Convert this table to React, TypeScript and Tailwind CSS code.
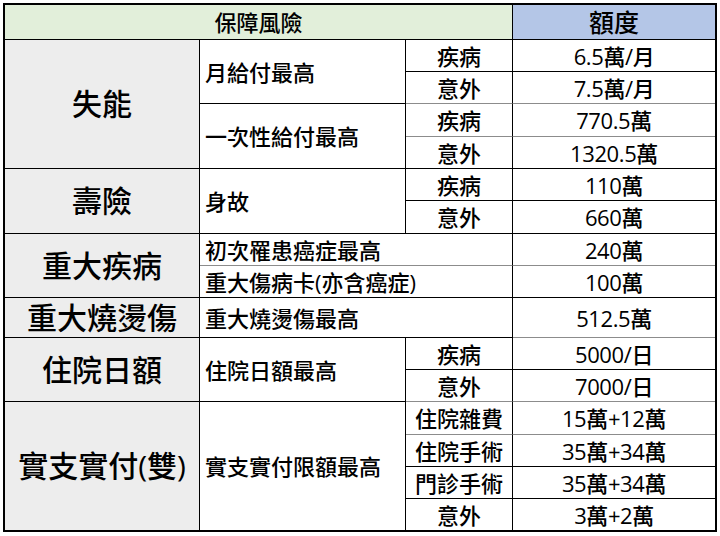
import React from "react";

type Cell = {
  t: string;
  kind: "cat" | "item" | "sub" | "val" | "head" | "headv";
  span?: string;
  r?: boolean; // has right border
  b?: boolean; // has bottom border
  gray?: boolean; // bottom border gray
};

const cells: Cell[] = [
  { t: "保障風險", kind: "head", span: "col-span-3", r: true, b: true },
  { t: "額度", kind: "headv", b: true },

  { t: "失能", kind: "cat", span: "row-span-4", r: true, b: true },
  { t: "月給付最高", kind: "item", span: "row-span-2", r: true, b: true },
  { t: "疾病", kind: "sub", r: true, b: true },
  { t: "6.5萬/月", kind: "val", b: true },
  { t: "意外", kind: "sub", r: true, b: true, gray: true },
  { t: "7.5萬/月", kind: "val", b: true, gray: true },
  { t: "一次性給付最高", kind: "item", span: "row-span-2", r: true, b: true },
  { t: "疾病", kind: "sub", r: true, b: true, gray: true },
  { t: "770.5萬", kind: "val", b: true, gray: true },
  { t: "意外", kind: "sub", r: true, b: true },
  { t: "1320.5萬", kind: "val", b: true },

  { t: "壽險", kind: "cat", span: "row-span-2", r: true, b: true },
  { t: "身故", kind: "item", span: "row-span-2", r: true, b: true },
  { t: "疾病", kind: "sub", r: true, b: true },
  { t: "110萬", kind: "val", b: true },
  { t: "意外", kind: "sub", r: true, b: true },
  { t: "660萬", kind: "val", b: true },

  { t: "重大疾病", kind: "cat", span: "row-span-2", r: true, b: true },
  { t: "初次罹患癌症最高", kind: "item", span: "col-span-2", r: true, b: true, gray: true },
  { t: "240萬", kind: "val", b: true, gray: true },
  { t: "重大傷病卡(亦含癌症)", kind: "item", span: "col-span-2", r: true, b: true },
  { t: "100萬", kind: "val", b: true },

  { t: "重大燒燙傷", kind: "cat", r: true, b: true },
  { t: "重大燒燙傷最高", kind: "item", span: "col-span-2", r: true, b: true },
  { t: "512.5萬", kind: "val", b: true, gray: true },

  { t: "住院日額", kind: "cat", span: "row-span-2", r: true, b: true },
  { t: "住院日額最高", kind: "item", span: "row-span-2", r: true, b: true },
  { t: "疾病", kind: "sub", r: true, b: true },
  { t: "5000/日", kind: "val", b: true },
  { t: "意外", kind: "sub", r: true, b: true, gray: true },
  { t: "7000/日", kind: "val", b: true, gray: true },

  { t: "實支實付(雙)", kind: "cat", span: "row-span-4", r: true },
  { t: "實支實付限額最高", kind: "item", span: "row-span-4", r: true },
  { t: "住院雜費", kind: "sub", r: true, b: true, gray: true },
  { t: "15萬+12萬", kind: "val", b: true, gray: true },
  { t: "住院手術", kind: "sub", r: true, b: true },
  { t: "35萬+34萬", kind: "val", b: true },
  { t: "門診手術", kind: "sub", r: true, b: true },
  { t: "35萬+34萬", kind: "val", b: true },
  { t: "意外", kind: "sub", r: true },
  { t: "3萬+2萬", kind: "val" },
];

const kindClass: Record<Cell["kind"], string> = {
  head: "bg-[#e2efda] justify-center text-[22px]",
  headv: "bg-[#b4c6e7] justify-center text-[25px]",
  cat: "bg-[#ededed] justify-center text-[30px]",
  item: "bg-white justify-start pl-[5px] text-[22px]",
  sub: "bg-white justify-center text-[22px]",
  val: "bg-white justify-center text-[22px] tracking-[-0.4px]",
};

export default function App() {
  return (
    <div className="w-[720px] h-[536px] bg-white pt-[3px] pl-[3px] font-['Open_Sans','Noto_Sans_CJK_TC',sans-serif] font-medium text-black">
      <div className="w-[714px] border-2 border-black">
        <div className="grid grid-cols-[195px_206px_107px_202px] grid-rows-[35px_32px_32px_33px_32px_32px_33px_32px_32px_40px_32px_32px_33px_32px_32px_31px]">
          {cells.map((c, i) => (
            <div
              key={i}
              className={[
                "flex items-center whitespace-nowrap leading-none",
                kindClass[c.kind],
                c.span ?? "",
                c.r ? "border-r border-r-black" : "",
                c.b ? (c.gray ? "border-b border-b-[#8c8c8c]" : "border-b border-b-black") : "",
              ].join(" ")}
            >
              {c.t}
            </div>
          ))}
        </div>
      </div>
    </div>
  );
}
